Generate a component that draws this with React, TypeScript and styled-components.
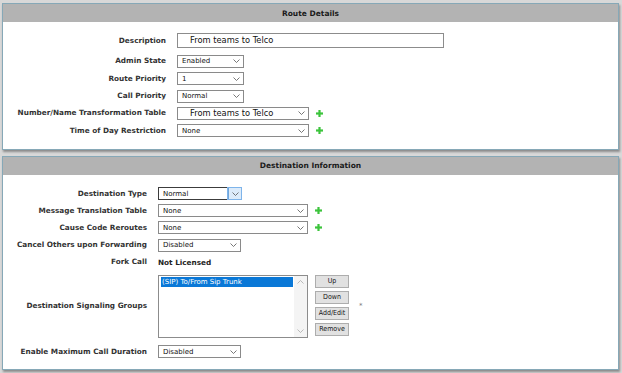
import React from "react";
import styled, { createGlobalStyle } from "styled-components";

const GlobalStyle = createGlobalStyle`
  html, body {
    margin: 0;
    background: #d8d8d8;
  }
  body {
    font-family: "DejaVu Sans", Verdana, sans-serif;
    color: #222;
  }
`;

const Page = styled.div`
  display: flex;
  flex-direction: column;
  gap: 6px;
  width: 622px;
  box-sizing: border-box;
  padding: 3px 3px 4px 2px;
`;

const Panel = styled.section`
  background: #fff;
  border: 1px solid #86a8b7;
  box-shadow: 1px 2px 2px rgba(0, 0, 0, 0.35);
`;

const PanelHeader = styled.div`
  height: 18px;
  background: #b3b3b3;
  display: flex;
  align-items: center;
  justify-content: center;
  font-weight: bold;
  font-size: 7.5px;
  color: #1a1a1a;
`;

const PanelBody = styled.div<{ $pt: number; $pb: number }>`
  display: flex;
  flex-direction: column;
  padding: ${(p) => p.$pt}px 0 ${(p) => p.$pb}px;
`;

const Row = styled.div<{ $lw: number; $h: number; $align?: string; $mt?: number }>`
  display: grid;
  grid-template-columns: ${(p) => p.$lw}px 1fr;
  column-gap: 11px;
  align-items: ${(p) => p.$align ?? "center"};
  height: ${(p) => p.$h}px;
  margin-top: ${(p) => p.$mt ?? 0}px;
`;

const Label = styled.div<{ $lh?: number }>`
  text-align: right;
  white-space: nowrap;
  font-weight: bold;
  font-size: 7.3px;
  line-height: ${(p) => p.$lh ?? 10}px;
  color: #333;
`;

const Control = styled.div`
  display: flex;
  align-items: center;
  gap: 7px;
`;

const TextInput = styled.div<{ $w: number }>`
  box-sizing: border-box;
  width: ${(p) => p.$w}px;
  height: 15px;
  border: 1px solid #8c8c8c;
  padding-left: 12px;
  font-size: 8.3px;
  line-height: 13px;
  color: #111;
`;

const SelectBox = styled.div<{ $w: number; $large?: boolean; $focus?: boolean }>`
  box-sizing: border-box;
  width: ${(p) => p.$w}px;
  height: 13px;
  border: 1px solid ${(p) => (p.$focus ? "#3c3c3c" : "#8a8a8a")};
  display: flex;
  align-items: center;
  justify-content: space-between;
  padding-left: ${(p) => (p.$large ? 12 : 4)}px;
  font-size: ${(p) => (p.$large ? 8.3 : 7)}px;
  color: #111;
  white-space: nowrap;
`;

const Arrow = styled.div<{ $focus?: boolean }>`
  box-sizing: border-box;
  height: 100%;
  width: ${(p) => (p.$focus ? 13 : 14)}px;
  display: flex;
  align-items: center;
  justify-content: center;
  background: ${(p) => (p.$focus ? "#dcebfa" : "transparent")};
  border-left: 1px solid ${(p) => (p.$focus ? "#6fa6dc" : "transparent")};
  margin-right: ${(p) => (p.$focus ? -1 : 0)}px;
  outline: ${(p) => (p.$focus ? "1px solid #7eb4ea" : "none")};
`;

const Chevron = ({ up = false, color = "#555" }: { up?: boolean; color?: string }) => (
  <svg width="7" height="4" viewBox="0 0 7 4">
    <polyline
      points={up ? "0.5,3.5 3.5,0.5 6.5,3.5" : "0.5,0.5 3.5,3.5 6.5,0.5"}
      fill="none"
      stroke={color}
      strokeWidth="0.8"
    />
  </svg>
);

const Plus = () => (
  <svg width="7" height="7" viewBox="0 0 7 7">
    <rect x="2.4" y="0" width="2.2" height="7" fill="#3cc43c" />
    <rect x="0" y="2.4" width="7" height="2.2" fill="#3cc43c" />
  </svg>
);

const StaticValue = styled.div`
  font-weight: bold;
  font-size: 7.3px;
  color: #222;
`;

const ListArea = styled.div`
  display: flex;
  align-items: flex-start;
  gap: 7px;
`;

const ListBox = styled.div`
  box-sizing: border-box;
  width: 150px;
  height: 63px;
  border: 1px solid #8c8c8c;
  display: flex;
`;

const ListItems = styled.div`
  flex: 1;
  padding: 1px 1px 0 2px;
`;

const ListItem = styled.div<{ $selected?: boolean }>`
  height: 10px;
  line-height: 10px;
  padding-left: 1px;
  font-size: 7px;
  background: ${(p) => (p.$selected ? "#0a78d7" : "transparent")};
  color: ${(p) => (p.$selected ? "#fff" : "#111")};
`;

const ScrollTrack = styled.div`
  width: 13px;
  background: #f4f4f4;
  display: flex;
  flex-direction: column;
  justify-content: space-between;
  align-items: center;
  padding: 4px 0;
`;

const ButtonStack = styled.div`
  display: flex;
  flex-direction: column;
  gap: 3px;
`;

const SmallButton = styled.button`
  box-sizing: border-box;
  width: 34px;
  height: 13px;
  padding: 0;
  border: 1px solid #adadad;
  background: #e1e1e1;
  font-family: "DejaVu Sans Condensed", "DejaVu Sans", sans-serif;
  font-size: 7px;
  color: #111;
`;

const Required = styled.span`
  align-self: center;
  margin-left: 3px;
  font-size: 7px;
  color: #777;
`;

type Sel = { value: string; w: number; large?: boolean; focus?: boolean; plus?: boolean };

function Select({ value, w, large, focus, plus }: Sel) {
  return (
    <Control>
      <SelectBox $w={w} $large={large} $focus={focus}>
        <span>{value}</span>
        <Arrow $focus={focus}>
          <Chevron />
        </Arrow>
      </SelectBox>
      {plus && <Plus />}
    </Control>
  );
}

const RD = 163;
const DI = 144;

export default function App() {
  return (
    <>
      <GlobalStyle />
      <Page>
        <Panel>
          <PanelHeader>Route Details</PanelHeader>
          <PanelBody $pt={11} $pb={9.7}>
            <Row $lw={RD} $h={19.8} $align="start">
              <Label $lh={15}>Description</Label>
              <Control>
                <TextInput $w={267}>From teams to Telco</TextInput>
              </Control>
            </Row>
            <Row $lw={RD} $h={17.3}>
              <Label>Admin State</Label>
              <Select value="Enabled" w={67} />
            </Row>
            <Row $lw={RD} $h={17.3}>
              <Label>Route Priority</Label>
              <Select value="1" w={67} />
            </Row>
            <Row $lw={RD} $h={17.3}>
              <Label>Call Priority</Label>
              <Select value="Normal" w={67} />
            </Row>
            <Row $lw={RD} $h={17.3}>
              <Label>Number/Name Transformation Table</Label>
              <Select value="From teams to Telco" w={132} large plus />
            </Row>
            <Row $lw={RD} $h={17.3}>
              <Label>Time of Day Restriction</Label>
              <Select value="None" w={132} plus />
            </Row>
          </PanelBody>
        </Panel>

        <Panel>
          <PanelHeader>Destination Information</PanelHeader>
          <PanelBody $pt={10} $pb={9.4}>
            <Row $lw={DI} $h={17.2}>
              <Label>Destination Type</Label>
              <Select value="Normal" w={83} focus />
            </Row>
            <Row $lw={DI} $h={17.2}>
              <Label>Message Translation Table</Label>
              <Select value="None" w={150} plus />
            </Row>
            <Row $lw={DI} $h={17.2}>
              <Label>Cause Code Reroutes</Label>
              <Select value="None" w={150} plus />
            </Row>
            <Row $lw={DI} $h={17.2}>
              <Label>Cancel Others upon Forwarding</Label>
              <Select value="Disabled" w={83} />
            </Row>
            <Row $lw={DI} $h={17.2}>
              <Label>Fork Call</Label>
              <StaticValue>Not Licensed</StaticValue>
            </Row>
            <Row $lw={DI} $h={63} $mt={4}>
              <Label>Destination Signaling Groups</Label>
              <ListArea>
                <ListBox>
                  <ListItems>
                    <ListItem $selected>(SIP) To/From Sip Trunk</ListItem>
                  </ListItems>
                  <ScrollTrack>
                    <Chevron up color="#aaa" />
                    <Chevron color="#aaa" />
                  </ScrollTrack>
                </ListBox>
                <ButtonStack>
                  <SmallButton>Up</SmallButton>
                  <SmallButton>Down</SmallButton>
                  <SmallButton>Add/Edit</SmallButton>
                  <SmallButton>Remove</SmallButton>
                </ButtonStack>
                <Required>*</Required>
              </ListArea>
            </Row>
            <Row $lw={DI} $h={17.2} $mt={5}>
              <Label>Enable Maximum Call Duration</Label>
              <Select value="Disabled" w={83} />
            </Row>
          </PanelBody>
        </Panel>
      </Page>
    </>
  );
}
